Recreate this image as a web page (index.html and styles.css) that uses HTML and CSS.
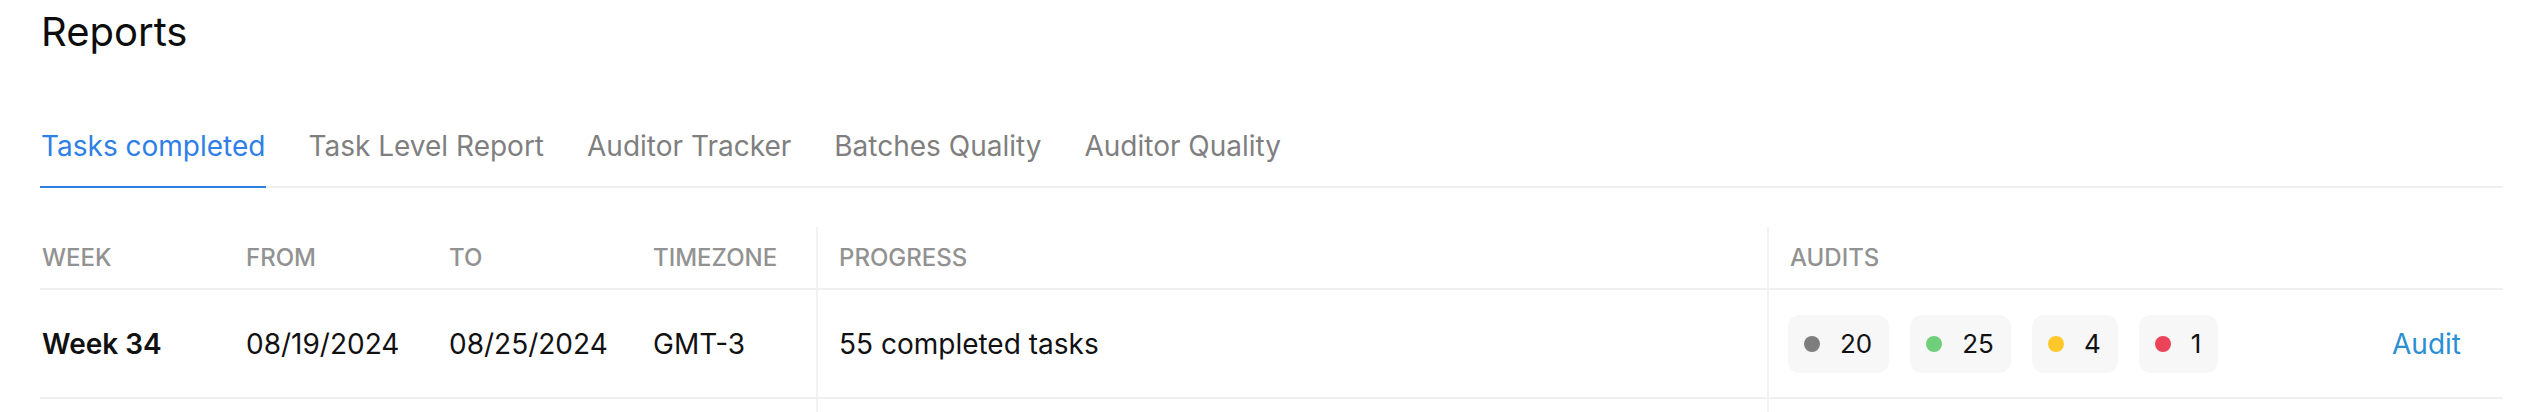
FILE: index.html
```html
<!DOCTYPE html>
<html lang="en">
<head>
<meta charset="utf-8">
<title>Reports</title>
<link rel="stylesheet" href="styles.css">
</head>
<body>
<div class="page">
  <h1 class="title">Reports</h1>
  <nav class="tabs">
    <a class="tab active">Tasks completed</a>
    <a class="tab">Task Level Report</a>
    <a class="tab">Auditor Tracker</a>
    <a class="tab">Batches Quality</a>
    <a class="tab">Auditor Quality</a>
  </nav>
  <div class="table">
    <div class="row head">
      <div class="cell first">WEEK</div>
      <div class="cell">FROM</div>
      <div class="cell">TO</div>
      <div class="cell">TIMEZONE</div>
      <div class="cell sep">PROGRESS</div>
      <div class="cell sep">AUDITS</div>
    </div>
    <div class="row body">
      <div class="cell first strong">Week 34</div>
      <div class="cell">08/19/2024</div>
      <div class="cell">08/25/2024</div>
      <div class="cell">GMT-3</div>
      <div class="cell sep">55 completed tasks</div>
      <div class="cell sep audits">
        <span class="pill"><span class="dot gray"></span>20</span>
        <span class="pill"><span class="dot green"></span>25</span>
        <span class="pill"><span class="dot yellow"></span>4</span>
        <span class="pill"><span class="dot red"></span>1</span>
        <a class="audit-link">Audit</a>
      </div>
    </div>
    <div class="row filler">
      <div class="cell first"></div>
      <div class="cell"></div>
      <div class="cell"></div>
      <div class="cell"></div>
      <div class="cell sep"></div>
      <div class="cell sep"></div>
    </div>
  </div>
</div>
</body>
</html>
```
FILE: styles.css
```css
* { box-sizing: border-box; }
html, body { margin: 0; padding: 0; background: #fff; }
body {
  font-family: Inter, "Noto Sans", "Liberation Sans", sans-serif;
  color: #111;
  overflow: hidden;
}
.page {
  padding: 8px 37px 0 40px;
}
.title {
  margin: 0;
  font-size: 40px;
  line-height: 48px;
  font-weight: 400;
  color: #0d0d0d;
  padding-left: 1px;
}
.tabs {
  margin-top: 73px;
  display: flex;
  gap: 41px;
  border-bottom: 2px solid #f0f0f0;
}
.tab {
  font-size: 28px;
  line-height: 34px;
  color: #7f7f7f;
  padding: 0 1px 23px;
  margin-bottom: -2px;
  border-bottom: 2px solid transparent;
  cursor: pointer;
}
.tab.active {
  color: #2f7fe6;
  border-bottom-color: #2f7fe6;
}
.table {
  margin-top: 39px;
}
.row {
  display: grid;
  grid-template-columns: 184px 203px 204px 185px 951px 1fr;
}
.row.head {
  border-bottom: 2px solid #f0f0f0;
}
.row.body {
  border-bottom: 2px solid #f0f0f0;
}
.cell {
  padding-left: 22px;
  display: flex;
  align-items: center;
}
.cell.first { padding-left: 2px; }
.cell.sep {
  border-left: 2px solid #f2f2f2;
  padding-left: 21px;
}
.head .cell {
  font-size: 24px;
  line-height: 29px;
  font-weight: 500;
  color: #929292;
  padding-top: 16px;
  padding-bottom: 16px;
}
.body .cell {
  font-size: 28px;
  line-height: 34px;
  min-height: 107px;
  color: #111;
}
.body .cell.strong { font-weight: 600; }
.filler .cell { height: 20px; }
.audits {
  gap: 21px;
  padding-right: 42px;
}
.body .cell.audits { padding-left: 19px; }
.pill {
  display: inline-flex;
  align-items: center;
  gap: 20px;
  height: 58px;
  padding: 0 17px 0 16px;
  background: #f7f7f7;
  border-radius: 12px;
  font-size: 26px;
}
.dot {
  width: 16px;
  height: 16px;
  border-radius: 50%;
  display: inline-block;
}
.dot.gray { background: #7e7e7e; }
.dot.green { background: #6fcf7b; }
.dot.yellow { background: #fec82a; }
.dot.red { background: #eb4459; }
.audit-link {
  margin-left: auto;
  color: #2b8fd3;
  cursor: pointer;
}
```
